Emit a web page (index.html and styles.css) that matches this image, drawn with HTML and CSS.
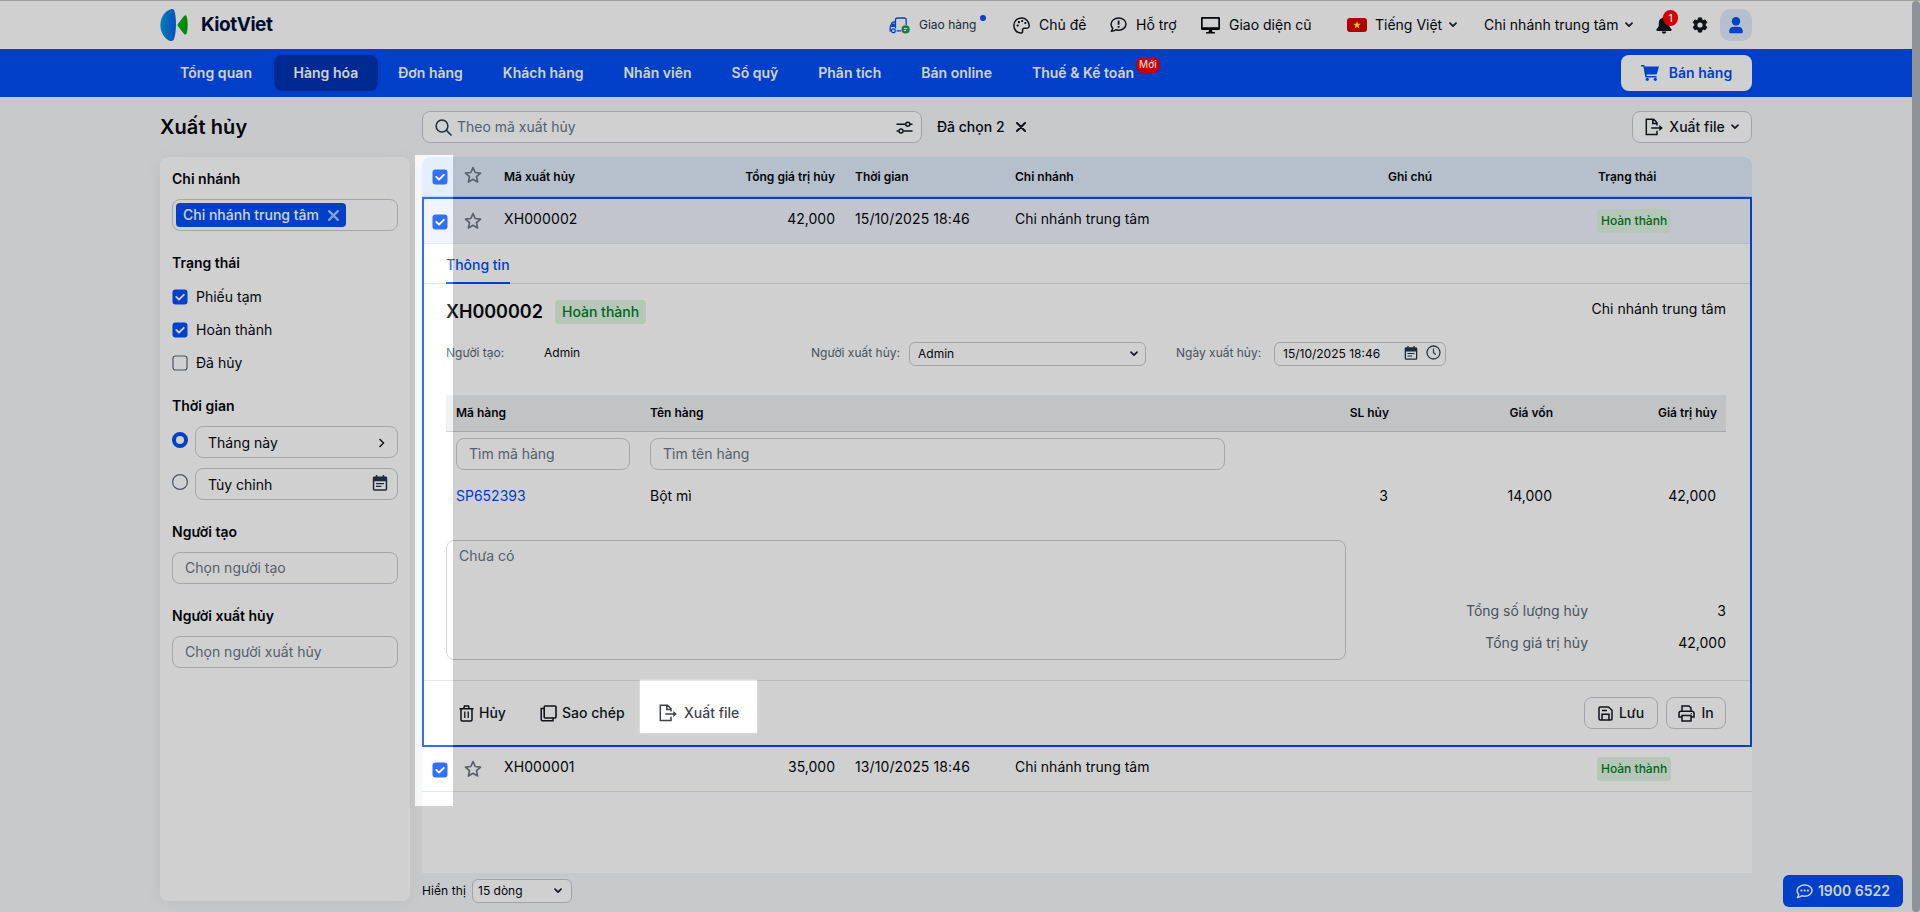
FILE: index.html
```html
<!DOCTYPE html>
<html lang="vi">
<head>
<meta charset="utf-8">
<title>Xuất hủy - KiotViet</title>
<link rel="stylesheet" href="styles.css">
</head>
<body>
<svg width="0" height="0" class="defs">
  <defs>
    <linearGradient id="lg1" x1="0" x2="1"><stop offset="0" stop-color="#0a9be0"/><stop offset="1" stop-color="#0660ea"/></linearGradient>
    <linearGradient id="lg2" x1="0" x2="1"><stop offset="0" stop-color="#00c00f"/><stop offset="1" stop-color="#00a010"/></linearGradient>
    <symbol id="check" viewBox="0 0 16 16"><rect x=".5" y=".5" width="15" height="15" rx="3" fill="#0050f5"/><path d="M4.3 7.9l2.7 2.7 4.8-4.8" fill="none" stroke="#fff" stroke-width="1.9" stroke-linecap="round" stroke-linejoin="round"/></symbol>
    <symbol id="star" viewBox="0 0 18 18"><path d="M9 1.6l2.2 4.9 5.3.6-4 3.6 1.1 5.3L9 13.3 4.4 16l1.1-5.3-4-3.6 5.3-.6z" fill="none" stroke="#6d7887" stroke-width="1.7" stroke-linejoin="round"/></symbol>
    <symbol id="chev" viewBox="0 0 8 6"><path d="M1 1.2l3 3 3-3" fill="none" stroke="#1a202c" stroke-width="1.7" stroke-linecap="round" stroke-linejoin="round"/></symbol>
    <symbol id="export" viewBox="0 0 18 18"><path d="M12 7.500V4.800L8.700 1.300H1.300v15.200H12V12.800M7.800 1.500v3.900h4M6.200 10h9.500" fill="none" stroke="currentColor" stroke-width="1.500"/><path d="M14.300 7l3.600 3-3.600 3z" fill="currentColor"/></symbol>
    <symbol id="cal" viewBox="0 0 16 16"><path d="M3.800 0h1.500v1.400h5.400V0h1.500v1.400h1.300c1 0 1.700.7 1.700 1.700v11c0 1-.7 1.700-1.700 1.700h-11C1.500 15.800.8 15.100.8 14.100v-11c0-1 .7-1.700 1.700-1.700h1.300zM2.300 6.300v7.700c0 .2.200.3.400.3h10.600c.2 0 .4-.1.400-.3V6.300zM4 7.900h8v1.300H4zM4 10.800h5.300v1.300H4z" fill="#2a3442" fill-rule="evenodd"/></symbol>
  </defs>
</svg>

<header class="top">
  <div class="wrap top-row">
    <div class="logo">
      <svg width="32" height="32" viewBox="0 0 32 32"><path d="M11.500 0C4.500 2 .4 8.500.4 16S4.500 30 10 32c1.800.2 3-.4 3.800-1.600C16.600 24 16.600 8 14.200 1.300 13.700.4 12.800 0 11.500 0z" fill="url(#lg1)"/><path d="M18 14.700l6-7.700c.9-1 2.200-.9 2.600.3 1.500 5 1.500 12 0 17.200-.4 1.300-1.700 1.500-2.600.4l-6-7.700c-.7-.8-.7-1.700 0-2.500z" fill="url(#lg2)"/></svg>
      <span class="logo-name">KiotViet</span>
    </div>
    <a class="t t-ship"><svg width="21" height="17" viewBox="0 0 21 17"><path d="M6.500 11.500V3c0-1.300.8-2 2-2h6.700c1.200 0 2 .7 2 2v5M6.500 5H4.700C3.700 5 3.200 5.400 2.800 6.300L1.200 9.700v4.100h1.300M7.500 13.800h4.700" fill="none" stroke="#0050f5" stroke-width="1.300"/><path d="M3.300 6.500h2.500V10H2z" fill="#0050f5"/><circle cx="4.300" cy="13.700" r="1.900" fill="#fff" stroke="#0050f5" stroke-width="1.300"/><circle cx="16.600" cy="12.400" r="4.100" fill="#12a52c"/><path d="M14.800 11.500h3.600M14.800 13.500h2.300" stroke="#fff" stroke-width="1"/></svg><span>Giao hàng</span><i class="dot"></i></a>
    <a class="t t-theme"><svg width="17" height="17" viewBox="0 0 17 17"><path d="M8.500.9C4.300.9.900 4.200.900 8.500c0 4.200 3 7.600 6.900 7.600 1.400 0 2-.9 1.800-1.900-.3-1.200-.1-2.500 1.300-2.900 1.500-.3 3.500.5 4.700-.9.800-1 .6-3.300-.3-5.100C14 2.600 11.500.9 8.500.9z" fill="none" stroke="#151a22" stroke-width="1.500"/><circle cx="4.700" cy="8.500" r="1.100"/><circle cx="5.900" cy="5.200" r="1.100"/><circle cx="9.200" cy="4" r="1.100"/><circle cx="12.300" cy="6" r="1.100"/></svg><span>Chủ đề</span></a>
    <a class="t t-help"><svg width="17" height="16" viewBox="0 0 17 16"><path d="M8.700 1C12.800 1 16 3.600 16 7s-3.200 6.200-7.300 6.200c-1 0-2-.2-2.900-.5-1 .9-2.500 1.500-4.500 1.600.9-1 1.400-2 1.400-3C1.600 10.100 1.100 8.600 1.100 7c0-3.400 3.500-6 7.600-6z" fill="none" stroke="#151a22" stroke-width="1.500" stroke-linejoin="round"/><path d="M8.600 3.500v4.200M8.600 9v1.700" stroke="#151a22" stroke-width="1.800"/></svg><span>Hỗ trợ</span></a>
    <a class="t t-old"><svg width="19" height="17" viewBox="0 0 19 17"><path d="M1.500 0h16A1.400 1.400 0 0 1 19 1.500v10a1.400 1.400 0 0 1-1.500 1.500H11l.5 2h1.800c.5 0 .7.300.7.800V16.500H5v-.8c0-.5.200-.7.700-.7h1.800l.5-2H1.500A1.400 1.400 0 0 1 0 11.500v-10A1.400 1.400 0 0 1 1.500 0zM1.700 1.700v8.600h15.600V1.700z" fill="#05080d" fill-rule="evenodd"/></svg><span>Giao diện cũ</span></a>
    <a class="t t-lang"><svg width="20" height="14" viewBox="0 0 20 14"><rect width="20" height="14" rx="3" fill="#d80000"/><path d="M10 3l.95 2.800h3l-2.400 1.800.9 2.900L10 8.800l-2.450 1.700.9-2.900-2.400-1.800h3z" fill="#ff0"/></svg><span>Tiếng Việt</span><svg class="cv" width="8" height="6"><use href="#chev"/></svg></a>
    <a class="t t-branch"><span>Chi nhánh trung tâm</span><svg class="cv" width="8" height="6"><use href="#chev"/></svg></a>
    <div class="bell"><svg width="16" height="18" viewBox="0 0 16 18"><path d="M8 .5c.8 0 1.300.4 1.300 1.200 2.300.6 3.900 2.400 3.900 5v2.500c0 1.300.9 2.300 2 3.500.9 1 .5 2.200-.8 2.200H1.600c-1.300 0-1.700-1.200-.8-2.200 1.100-1.200 2-2.200 2-3.500V6.700c0-2.600 1.600-4.400 3.900-5C6.700.9 7.200.500 8 .500zM5.800 15.600h4.400c0 1.300-.9 2.200-2.200 2.200s-2.200-.9-2.200-2.200z" fill="#12181f"/></svg><b>1</b></div>
    <svg class="gear" width="16" height="16" viewBox="0 0 16 16"><path d="M6.500.5h3l.5 2 1.200.7 2-.7 1.600 2.700-1.500 1.500v1.500l1.500 1.500-1.600 2.700-2-.6-1.200.7-.5 2.200h-3L6 12.500l-1.200-.7-2 .6-1.600-2.700 1.500-1.500V6.700L1.200 5.200l1.600-2.700 2 .7L6 2.500z" transform="translate(0 .4)" fill="#12181f" stroke="#12181f" stroke-linejoin="round"/><circle cx="8" cy="8" r="2.600" fill="#fff"/></svg>
    <div class="avatar"><svg width="14" height="17" viewBox="0 0 14 17"><circle cx="7" cy="4.200" r="4.200" fill="#0050f5"/><path d="M.2 14.800C.2 11.500 2 9.800 5 9.800h4c3 0 4.800 1.700 4.800 5 0 1-.5 1.500-1.500 1.500H1.700c-1 0-1.500-.5-1.500-1.500z" fill="#0050f5"/></svg></div>
  </div>
</header>

<nav class="nav">
  <div class="wrap nav-row">
    <a>Tổng quan</a><a class="on">Hàng hóa</a><a>Đơn hàng</a><a>Khách hàng</a><a>Nhân viên</a><a>Sổ quỹ</a><a>Phân tích</a><a>Bán online</a><a class="tax">Thuế &amp; Kế toán<em>Mới</em></a>
    <button class="sell"><svg width="18" height="16" viewBox="0 0 18 16"><path d="M0 0h2.800c.5 0 .7.300.8.800L3.700 1.500H18L16 8.600c-.2.600-.6.900-1.200.9H5.600l.2 1.400H15.600v1.600H5.200c-.6 0-.9-.3-1-.8L2.400 1.600H0z" fill="#0050f5"/><circle cx="6.300" cy="14.300" r="1.600" fill="#0050f5"/><circle cx="14.300" cy="14.300" r="1.600" fill="#0050f5"/></svg>Bán hàng</button>
  </div>
</nav>

<main class="wrap main">
  <div class="bar">
    <h1>Xuất hủy</h1>
    <div class="search">
      <svg width="17" height="17" viewBox="0 0 17 17"><circle cx="7" cy="7" r="5.900" fill="none" stroke="#2a3442" stroke-width="1.500"/><path d="M11.300 11.300l4.700 4.700" stroke="#2a3442" stroke-width="1.600" stroke-linecap="round"/></svg>
      <span>Theo mã xuất hủy</span>
      <svg class="tune" width="17" height="13" viewBox="0 0 17 13"><g fill="none" stroke="#12181f" stroke-width="1.500"><path d="M.5 3.200h9M14 3.200h2.500M.5 9.900h2M7.500 9.900h9"/><circle cx="11.800" cy="3.200" r="2"/><circle cx="5" cy="9.900" r="2"/></g></svg>
    </div>
    <span class="picked">Đã chọn 2</span>
    <svg class="x" width="10" height="10" viewBox="0 0 10 10"><path d="M1 1l8 8M9 1L1 9" stroke="#12181f" stroke-width="2" stroke-linecap="round"/></svg>
    <button class="btn exp"><svg width="18" height="18"><use href="#export"/></svg>Xuất file<svg width="8" height="6"><use href="#chev"/></svg></button>
  </div>

  <div class="cols">
    <aside class="side">
      <section><h3>Chi nhánh</h3><div class="field tagbox"><span class="tag">Chi nhánh trung tâm<svg width="11" height="11" viewBox="0 0 10 10"><path d="M1 1l8 8M9 1L1 9" stroke="#a0c6fa" stroke-width="2" stroke-linecap="round"/></svg></span></div></section>
      <section class="checks"><h3>Trạng thái</h3>
        <label><svg width="16" height="16"><use href="#check"/></svg>Phiếu tạm</label>
        <label><svg width="16" height="16"><use href="#check"/></svg>Hoàn thành</label>
        <label><svg width="16" height="16" viewBox="0 0 16 16"><rect x="1" y="1" width="14" height="14" rx="2.500" fill="none" stroke="#5d6876" stroke-width="1.200"/></svg>Đã hủy</label>
      </section>
      <section class="time"><h3>Thời gian</h3>
        <div class="radio"><svg width="16" height="16"><circle cx="8" cy="8" r="6" fill="#fff" stroke="#0050f5" stroke-width="4"/></svg><div class="field"><span>Tháng này</span><svg width="7" height="10" viewBox="0 0 7 10"><path d="M1.500 1l4 4-4 4" fill="none" stroke="#12181f" stroke-width="1.400"/></svg></div></div>
        <div class="radio"><svg width="16" height="16"><circle cx="8" cy="8" r="7.400" fill="none" stroke="#5d6876" stroke-width="1.200"/></svg><div class="field"><span>Tùy chỉnh</span><svg class="ci" width="16" height="16"><use href="#cal"/></svg></div></div>
      </section>
      <section><h3>Người tạo</h3><div class="field ph">Chọn người tạo</div></section>
      <section><h3>Người xuất hủy</h3><div class="field ph">Chọn người xuất hủy</div></section>
    </aside>

    <div class="content">
      <div class="table">
        <div class="row head"><svg class="cb" width="16" height="16"><use href="#check"/></svg><svg class="st" width="18" height="18"><use href="#star"/></svg><span>Mã xuất hủy</span><span class="num">Tổng giá trị hủy</span><span>Thời gian</span><span>Chi nhánh</span><span>Ghi chú</span><span>Trạng thái</span></div>
        <div class="open">
          <div class="row sel"><svg class="cb" width="16" height="16"><use href="#check"/></svg><svg class="st" width="18" height="18"><use href="#star"/></svg><span class="code">XH000002</span><span class="num">42,000</span><span class="date">15/10/2025 18:46</span><span>Chi nhánh trung tâm</span><span></span><i class="badge">Hoàn thành</i></div>
          <div class="tabs"><span>Thông tin</span></div>
          <div class="detail">
            <div class="dhead"><h2>XH000002</h2><i class="badge big">Hoàn thành</i><span>Chi nhánh trung tâm</span></div>
            <div class="meta">
              <label class="m1">Người tạo:</label><span class="m2">Admin</span>
              <label class="m3">Người xuất hủy:</label><div class="mini m4">Admin<svg width="8" height="6"><use href="#chev"/></svg></div>
              <label class="m5">Ngày xuất hủy:</label><div class="mini m6">15/10/2025 18:46<svg class="ci" width="14" height="14"><use href="#cal"/></svg><svg width="15" height="15" viewBox="0 0 15 15"><path d="M7.500 3.500v4.300l2.400 1.700" fill="none" stroke="#3b4655" stroke-width="1.200"/><circle cx="7.500" cy="7.500" r="6.500" fill="none" stroke="#3b4655" stroke-width="1.300"/></svg></div>
            </div>
            <div class="items ihead"><span>Mã hàng</span><span>Tên hàng</span><span class="r">SL hủy</span><span class="r">Giá vốn</span><span class="r">Giá trị hủy</span></div>
            <div class="items find"><div class="field ph">Tìm mã hàng</div><div class="field ph">Tìm tên hàng</div></div>
            <div class="items line"><a>SP652393</a><span>Bột mì</span><span class="r">3</span><span class="r">14,000</span><span class="r">42,000</span></div>
            <div class="sum"><div class="note">Chưa có</div><div class="totals"><span>Tổng số lượng hủy</span><b>3</b><span>Tổng giá trị hủy</span><b>42,000</b></div></div>
          </div>
          <div class="acts">
            <span class="a1"><svg width="15" height="17" viewBox="0 0 15 17"><path d="M.5 3.700h14M4.700 3.500l.8-2.500h4l.8 2.500M2 3.700v11.100c0 .8.400 1.200 1.200 1.200h8.600c.8 0 1.200-.4 1.200-1.200V3.700" fill="none" stroke="currentColor" stroke-width="1.500"/><path d="M5.800 6.500v6.500M9.200 6.500v6.500" fill="none" stroke="currentColor" stroke-width="1.300"/></svg>Hủy</span>
            <span class="a2"><svg width="17" height="17" viewBox="0 0 17 17"><rect x="4.200" y="1" width="11.800" height="12" rx="1" fill="none" stroke="currentColor" stroke-width="1.600"/><path d="M4 3.600H1.200v11c0 .8.400 1.200 1.200 1.200h10.600V13" fill="none" stroke="currentColor" stroke-width="1.500"/></svg>Sao chép</span>
            <span class="a3"><svg width="18" height="18"><use href="#export"/></svg>Xuất file</span>
            <button class="btn save"><svg width="15" height="15" viewBox="0 0 15 15"><path d="M1 2.200C1 1.400 1.400 1 2.200 1H10.500L14 4.300v8.500c0 .8-.4 1.200-1.200 1.200H2.200C1.400 14 1 13.600 1 12.800zM4 14V8.300h7V14M4 4.500h5" fill="none" stroke="currentColor" stroke-width="1.500"/></svg>Lưu</button>
            <button class="btn print"><svg width="17" height="17" viewBox="0 0 17 17"><path d="M4 6.300V1h7l2 2v3.300M4 12H1V8.500c0-1.300.9-2.200 2.200-2.200h10.600C15.100 6.300 16 7.200 16 8.500V12h-3M4 10.500h9V16H4z" fill="none" stroke="currentColor" stroke-width="1.500"/><circle cx="13.300" cy="8.600" r=".7" fill="currentColor"/></svg>In</button>
          </div>
        </div>
        <div class="row"><svg class="cb" width="16" height="16"><use href="#check"/></svg><svg class="st" width="18" height="18"><use href="#star"/></svg><span class="code">XH000001</span><span class="num">35,000</span><span class="date">13/10/2025 18:46</span><span>Chi nhánh trung tâm</span><span></span><i class="badge">Hoàn thành</i></div>
      </div>
      <div class="pager"><span>Hiển thị</span><div class="mini">15 dòng<svg width="8" height="6"><use href="#chev"/></svg></div></div>
    </div>
  </div>
</main>

<div class="phone"><svg width="17" height="15" viewBox="0 0 17 15"><path d="M8.700 1C12.800 1 16 3.400 16 6.500S12.800 12.200 8.700 12.200c-1 0-2-.2-2.900-.4-1 .9-2.500 1.500-4.500 1.600.9-1 1.400-2 1.400-3C1.600 9.300 1.100 8 1.100 6.500 1.100 3.400 4.600 1 8.700 1z" fill="none" stroke="#fff" stroke-width="1.500" stroke-linejoin="round"/><circle cx="5.500" cy="6.600" r="1.100" fill="#fff"/><circle cx="8.700" cy="6.600" r="1.100" fill="#fff"/><circle cx="11.900" cy="6.600" r="1.100" fill="#fff"/></svg>1900 6522</div>
<div class="scroll"></div>
<div class="dim"></div>
<div class="spot spot-select"></div>
<div class="spot spot-export"></div>
</body>
</html>
```
FILE: styles.css
```css
* { box-sizing: border-box; }
body { margin: 0; width: 1920px; height: 912px; overflow: hidden; position: relative; background: #f5f7f9; font: 14px/20px Inter, "Noto Sans", sans-serif; color: #05080d; }
h1, h2, h3 { margin: 0; }
svg { flex: none; display: block; }
i, em { font-style: normal; }
.defs { position: absolute; }
button { font: inherit; cursor: pointer; }
.wrap { width: 1592px; margin: 0 0 0 160px; }

.top { height: 49px; border-top: 1px solid #c3c3c3; background: #fff; }
.top-row { height: 48px; display: flex; align-items: center; }
.logo { display: flex; align-items: center; gap: 9px; width: 729px; flex: none; }
.logo-name { font-size: 19px; font-weight: 700; letter-spacing: -.45px; color: #001038; }
.t { display: flex; align-items: center; flex: none; white-space: nowrap; gap: 9px; }
.t .cv { margin-left: -1px; }
.t-ship { width: 124px; font-size: 12px; color: #2a3442; }
.t-ship .dot { width: 6px; height: 6px; border-radius: 50%; background: #0050f5; margin: -14px 0 0 -5px; }
.t-theme { width: 97px; }
.t-help { width: 91px; }
.t-old { width: 146px; }
.t-lang { width: 137px; gap: 8px; }
.t-branch { width: 172px; gap: 8px; }
.bell { width: 36px; position: relative; }
.bell b { position: absolute; left: 7px; top: -6px; width: 15px; height: 16px; border-radius: 8px; background: #f00; color: #fff; font: 600 10px/16px Inter, sans-serif; text-align: center; }
.gear { margin-right: 12px; }
.avatar { width: 32px; height: 32px; border-radius: 10px; background: #deecfb; display: grid; place-items: center; }

.nav { height: 48px; width: 1912px; background: #004ff5; color: #fff; font-weight: 600; }
.nav-row { height: 48px; display: flex; align-items: center; }
.nav a { padding: 8px 20px; height: 36px; border-radius: 8px; white-space: nowrap; }
.nav a:first-child { padding-right: 21.500px; letter-spacing: .07px; }
.nav .on { background: #0033b4; }
.tax { position: relative; }
.tax em { position: absolute; left: 124px; top: 2px; width: 24px; height: 16px; border-radius: 7px; background: #f00000; font-size: 10px; line-height: 15px; text-align: center; font-weight: 500; }
.sell { margin-left: auto; width: 131px; height: 36px; border: 0; border-radius: 8px; background: #fff; color: #004ff5; font-weight: 600; display: flex; align-items: center; justify-content: center; gap: 10px; }

.bar { display: flex; align-items: center; height: 60px; }
.bar h1 { width: 262px; font-size: 20px; line-height: 28px; font-weight: 600; letter-spacing: .1px; }
.search { width: 500px; height: 32px; border: 1px solid #c4c9d0; border-radius: 8px; background: #fff; display: flex; align-items: center; padding: 0 8px 0 12px; gap: 5px; color: #6b7583; }
.tune { margin-left: auto; }
.picked { margin-left: 15px; width: 79px; font-weight: 500; white-space: nowrap; }
.btn { height: 32px; border: 1px solid #c4c9d0; border-radius: 8px; background: #fff; font-weight: 500; color: #12181f; display: flex; align-items: center; justify-content: center; padding: 0; gap: 6px; }
.exp { margin-left: auto; width: 120px; }
.cols { display: flex; gap: 12px; }

.side { width: 250px; height: 744px; border-radius: 8px; background: #fff; box-shadow: 0 2px 20px rgba(0, 0, 0, .06); padding: 12px; display: flex; flex-direction: column; gap: 22px; }
.side h3 { font-size: 14px; line-height: 20px; font-weight: 600; margin-bottom: 10px; }
.field { height: 32px; border: 1px solid #c9ccd3; border-radius: 8px; background: #fff; display: flex; align-items: center; padding: 0 12px; white-space: nowrap; }
.ph { color: #6b7583; }
.tagbox { padding: 0 3px; }
.tag { height: 24px; width: 170px; background: #004ff5; border-radius: 4px; color: #fff; font-weight: 500; display: flex; align-items: center; gap: 9px; padding-left: 7px; }
.checks { display: flex; flex-direction: column; gap: 13px; margin-bottom: 1px; }
.checks h3 { margin-bottom: 1px; }
.checks label { display: flex; gap: 8px; align-items: center; }
.radio { display: flex; gap: 7px; margin-bottom: 10px; }
.radio > svg { margin-top: 6px; }
.radio .field { flex: 1; justify-content: space-between; padding-top: 2px; }
.radio .field .ci { margin: -4px -3px 0 0; }
.time .radio:last-child { margin-bottom: 0; }

.table { width: 1330px; height: 716px; background: #fff; border-radius: 8px 8px 0 0; overflow: hidden; }
.row { display: grid; grid-template-columns: 32px 39px 171px 180px 160px 373px 209px 1fr; height: 45px; padding-left: 11px; align-items: center; border-bottom: 1px solid #e2e5ec; }
.row > span { white-space: nowrap; margin-top: -5px; }
.row .num { text-align: right; padding-right: 20px; }
.row .date, .row .code { letter-spacing: .1px; }
.row .cb { margin: 1px 0 0 -1px; }
.head { height: 40px; background: #deecfb; font-size: 12px; font-weight: 600; border-bottom: 1px solid #b3d1f5; }
.head > span { margin-top: 0; }
.head > span:last-child { padding-left: 1px; }
.row.head .cb { margin-top: 0; }
.st { margin-left: -1px; margin-top: -1px; }
.head .st { margin-top: -4px; }
.badge { justify-self: start; height: 24px; padding: 0 4px; border-radius: 4px; background: #dff3e3; color: #007d1c; font-size: 12px; font-weight: 500; line-height: 24px; white-space: nowrap; }
.open { height: 550px; border: 2px solid #004ff5; }
.sel { background: #eef2fc; padding-left: 9px; }
.tabs { height: 40px; border-bottom: 1px solid #dcdfe3; padding-left: 22px; }
.tabs span { display: inline-block; height: 40px; padding-top: 11px; color: #004ff5; font-weight: 500; border-bottom: 2px solid #004ff5; }
.detail { padding: 16px 24px 0 22px; height: 396px; }
.dhead { display: flex; align-items: center; height: 24px; }
.dhead h2 { font-size: 18px; font-weight: 600; line-height: 24px; width: 109px; }
.badge.big { font-size: 14px; padding: 0 7px; }
.dhead > span { margin-left: auto; margin-top: -7px; }
.meta { display: flex; height: 24px; margin-top: 18px; font-size: 12px; line-height: 22px; }
.meta label { color: #5b6674; white-space: nowrap; }
.m1 { width: 98px; }
.m2 { width: 267px; }
.m3 { width: 98px; }
.m4 { width: 237px; margin-right: 30px; }
.m5 { width: 98px; }
.m6 { width: 172px; }
.mini { height: 24px; border: 1px solid #c4c9d0; border-radius: 6px; background: #fff; display: flex; align-items: center; justify-content: space-between; padding: 0 7px 0 8px; font-size: 12px; white-space: nowrap; }
.m6 { padding: 0 4px 0 8px; }
.m6 svg { margin-top: -3px; }
.m6 .ci { margin-left: 16px; }
.items { display: grid; grid-template-columns: 194px 575px 164px 164px 164px; padding-left: 10px; align-items: center; }
.r { text-align: right; }
.ihead { height: 37px; margin-top: 29px; background: #edeff1; border-bottom: 1px solid #c9ccd3; font-size: 12px; font-weight: 600; }
.find { padding-top: 6px; }
.find .field:first-child { width: 174px; }
.line { height: 52px; }
.line a { color: #004ff5; }
.line .r { padding-right: 1px; }
.sum { display: flex; justify-content: space-between; margin-top: 18px; }
.note { width: 900px; height: 120px; border: 1px solid #c9ccd3; border-radius: 8px; padding: 5px 12px; color: #6b7583; }
.totals { display: grid; grid-template-columns: auto 138px; row-gap: 12px; align-content: start; text-align: right; padding-top: 61px; color: #5b6674; }
.totals b { font-weight: 400; color: #05080d; }
.acts { height: 66px; border-top: 1px solid #e2e5ec; display: flex; padding: 16px 24px 0 35px; font-weight: 500; color: #12181f; }
.acts > span { height: 32px; display: flex; align-items: center; gap: 5px; white-space: nowrap; }
.a1 { width: 81px; }
.a2 { width: 119px; }
.acts .a3 { gap: 7px; }
.save { width: 74px; margin-left: auto; margin-right: 8px; }
.print { width: 60px; }
.pager { display: flex; align-items: center; height: 24px; margin-top: 6px; font-size: 12px; }
.pager span { width: 50px; letter-spacing: .1px; }
.pager .mini { width: 100px; padding: 0 9px 0 5px; }

.phone { position: absolute; left: 1783px; top: 875px; width: 120px; height: 32px; border-radius: 6px; background: #004ff5; color: #fff; font-weight: 600; display: flex; align-items: center; justify-content: center; gap: 5px; }
.scroll { position: absolute; left: 1912px; top: 1px; width: 8px; height: 911px; border-radius: 4px; background: #adb2bc; }

/* Onboarding mask with two openings */
.dim { position: absolute; inset: 0; background: rgba(0, 0, 0, .184); clip-path: path(evenodd, "M0 0H1920V912H0ZM415 155H453V806H415ZM640 680H757V733H640Z"); }
.spot { position: absolute; background: rgba(255, 255, 255, .19); }
.spot-select { left: 415px; top: 155px; width: 38px; height: 651px; }
.spot-export { left: 640px; top: 680px; width: 117px; height: 53px; box-shadow: 0 0 2px rgba(255, 255, 255, .6); }
```
